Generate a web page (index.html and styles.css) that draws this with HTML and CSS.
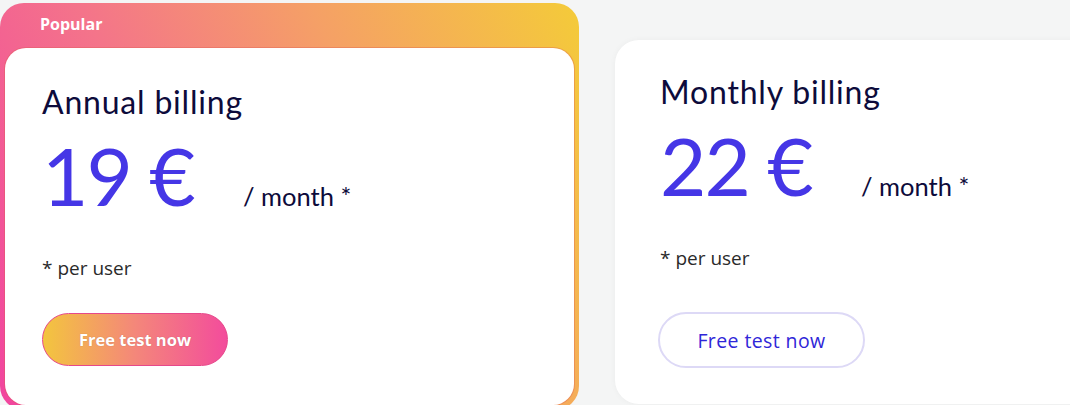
FILE: index.html
```html
<!DOCTYPE html>
<html lang="en">
<head>
<meta charset="utf-8">
<link rel="stylesheet" href="styles.css">
</head>
<body>
<div class="plans">
  <div class="popular">
    <div class="popular-label">Popular</div>
    <div class="card card-inner">
      <h2 class="title">Annual billing</h2>
      <div class="price-row">
        <span class="price">19 €</span>
        <span class="per">/ month *</span>
      </div>
      <p class="note">* per user</p>
      <a class="btn btn-grad" href="#">Free test now</a>
    </div>
  </div>
  <div class="card card-plain">
    <h2 class="title">Monthly billing</h2>
    <div class="price-row">
      <span class="price">22 €</span>
      <span class="per">/ month *</span>
    </div>
    <p class="note">* per user</p>
    <a class="btn btn-outline" href="#">Free test now</a>
  </div>
</div>
</body>
</html>
```
FILE: styles.css
```css
html, body {
  margin: 0;
  padding: 0;
  background: #f4f5f5;
  overflow: hidden;
  height: 405px;
}
body {
  font-family: Lato, "Open Sans", sans-serif;
  color: #0d0b3b;
}
.plans {
  display: flex;
  align-items: flex-start;
  gap: 36px;
  padding-top: 3px;
  width: 1200px;
}
.popular {
  width: 579px;
  flex: none;
  height: 407px;
  border-radius: 24px;
  background: linear-gradient(65deg, #f1449f 0%, #f4748a 35%, #f5a066 65%, #f4cb39 100%);
  display: flex;
  flex-direction: column;
  box-sizing: border-box;
  padding: 0 5px 5px;
}
.popular-label {
  color: #fff;
  font-weight: 700;
  font-size: 16px;
  height: 45px;
  line-height: 42px;
  padding-left: 35px;
  font-family: "Open Sans", sans-serif;
}
.card {
  background: #fff;
  border-radius: 21px;
  box-sizing: border-box;
  display: flex;
  flex-direction: column;
  align-items: flex-start;
}
.card-inner {
  flex: 1;
  padding: 34px 37px 0;
  box-shadow: 0 0 0 1px rgba(220, 90, 80, 0.35);
}
.card-plain {
  margin-top: 37px;
  width: 520px;
  height: 364px;
  border-radius: 24px;
  padding: 32px 45px 0;
  box-shadow: 0 0 6px rgba(0, 0, 0, 0.04);
}
.title {
  margin: 0;
  font-size: 32px;
  letter-spacing: 0.8px;
  font-weight: 400;
  line-height: 40px;
  color: #0d0b3b;
}
.price-row {
  display: flex;
  align-items: baseline;
  margin-top: 10px;
  height: 86px;
}
.price {
  font-size: 80px;
  line-height: 86px;
  color: #4536e6;
  font-weight: 400;
  width: 201px;
  letter-spacing: -2px;
}
.per {
  font-size: 25.5px;
  color: #0d0b3b;
}
.note {
  margin: 38px 0 0;
  font-size: 19px;
  color: #2a2a2a;
  font-family: "Open Sans", sans-serif;
  line-height: 24px;
}
.btn {
  display: flex;
  align-items: center;
  justify-content: center;
  text-decoration: none;
  border-radius: 30px;
  box-sizing: border-box;
  font-family: "Open Sans", sans-serif;
}
.btn-grad {
  margin-top: 33px;
  width: 186px;
  height: 53px;
  background: linear-gradient(90deg, #f3c53e 0%, #f4877a 50%, #f34c9c 100%);
  border: 1px solid #e6488a;
  color: #fff;
  font-weight: 700;
  font-size: 16.5px;
  text-shadow: 0 0 1px rgba(120, 40, 40, 0.4);
}
.btn-outline {
  margin-top: 42px;
  margin-left: -2px;
  width: 207px;
  height: 56px;
  border: 2px solid #ddd9f6;
  color: #2f26d8;
  font-size: 19.5px;
  letter-spacing: 0.4px;
  background: #fff;
}
```
